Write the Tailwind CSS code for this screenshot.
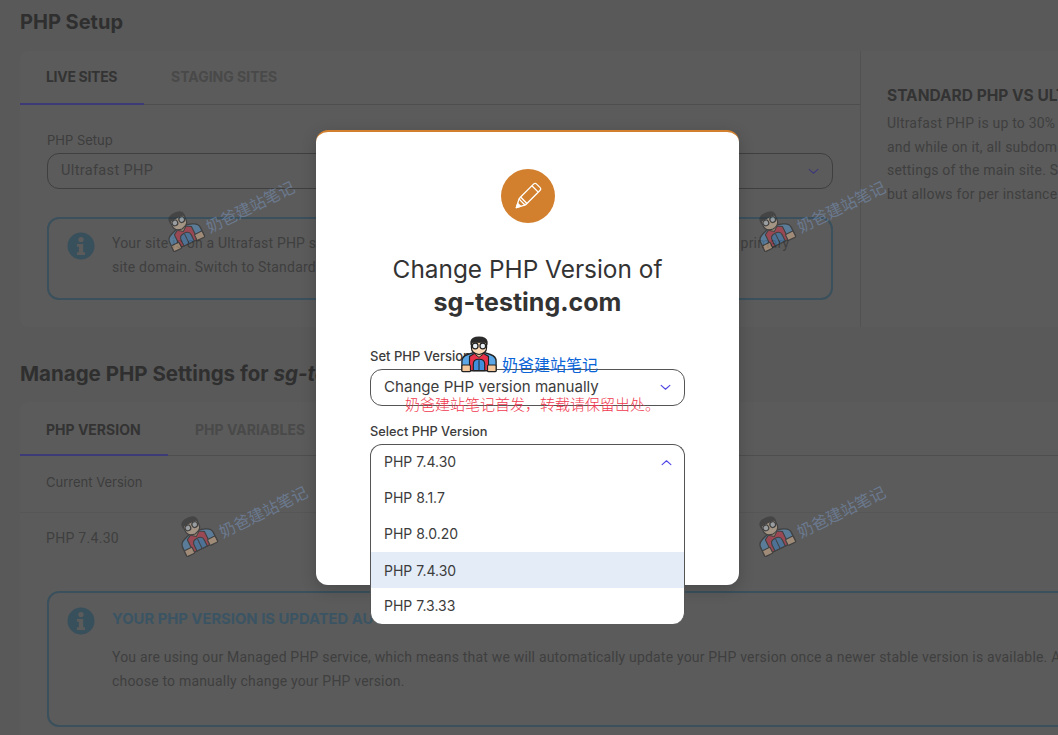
<!DOCTYPE html>
<html lang="en">
<head>
<meta charset="utf-8">
<title>PHP Manager</title>
<script src="https://cdn.jsdelivr.net/npm/@tailwindcss/browser@4"></script>
</head>
<body class="bg-[#595959] font-['Roboto',sans-serif] text-[#3f3f3f] h-[735px] w-[1058px] overflow-hidden relative">

<!-- shared drawings -->
<svg class="hidden">
    <symbol id="mascot" viewBox="0 0 40 40">
        <path d="M2 37V27q0-5 6-7l6-2h12l6 2q6 2 6 7v10z" fill="#5aa6e6" stroke="#222" stroke-width="1.4"/>
        <path d="M10 37V22l5-3h10l5 3v15z" fill="#e8324a" stroke="#222" stroke-width="1.2"/>
        <path d="M14 37V30q0-5 6-5t6 5v7z" fill="#3f8fdc" stroke="#222" stroke-width="1.2"/>
        <path d="M20 26v11" stroke="#222" stroke-width="1"/>
        <rect x="2" y="31" width="9" height="7" rx="1" fill="#f3c79a" stroke="#222" stroke-width="1.2"/>
        <rect x="29" y="31" width="9" height="7" rx="1" fill="#f3c79a" stroke="#222" stroke-width="1.2"/>
        <path d="M16 15h8v5l-4 3-4-3z" fill="#f0bd92" stroke="#222" stroke-width="1"/>
        <path d="M12 7h16v6q0 6-8 7-8-1-8-7z" fill="#fbd9b5" stroke="#222" stroke-width="1.2"/>
        <path d="M11 10V6q1-5 9-5t9 5v4l-3-3H14z" fill="#2b2b2b"/>
        <circle cx="16" cy="11" r="3" fill="#e8f0f6" stroke="#222" stroke-width="1.3"/>
        <circle cx="24" cy="11" r="3" fill="#e8f0f6" stroke="#222" stroke-width="1.3"/>
    </symbol>
    <symbol id="info" viewBox="0 0 28 28">
        <circle cx="14" cy="14" r="13.5" fill="currentColor"/>
        <circle cx="14" cy="7.6" r="2.7" fill="#5b5b5b"/>
        <path d="M10 12h6.2v8.2H18V23h-8v-2.800h1.900v-5.400H10z" fill="#5b5b5b"/>
    </symbol>
    <symbol id="chev" viewBox="0 0 12 8">
        <path d="M1 1.500l5 4.500 5-4.500" fill="none" stroke="currentColor" stroke-width="1.300" stroke-linecap="round" stroke-linejoin="round"/>
    </symbol>
</svg>

<!-- Page behind the dialog -->
<main class="px-5 pt-[8px]">
    <h2 class="font-['Inter',sans-serif] font-bold text-[#2f2f2f] text-[20px] leading-[28px] mb-[15px]">PHP Setup</h2>

    <section class="flex bg-[#5b5b5b] rounded-t-lg rounded-b-lg w-[1100px] h-[276px]">
        <div class="w-[841px] border-r border-[#525252] shrink-0">
            <div class="flex h-[54px] border-b border-[#4e4e4e] font-['Inter',sans-serif] font-bold text-[14px]">
                <span class="w-[124px] h-[54px] border-b-2 border-[#3d3a78] pl-[26px] pt-[15px] text-[#333] tracking-[-0.3px]">LIVE SITES</span>
                <span class="pl-[27px] pt-[15px] text-[#494949]">STAGING SITES</span>
            </div>
            <div class="px-[27px] pt-[26px]">
                <div class="font-['Inter',sans-serif] text-[13px] leading-[18px] mb-[4px] text-[#3d3d3d]">PHP Setup</div>
                <div class="h-[36px] border border-[#3f3f3f] rounded-xl flex items-center justify-between pl-[13px] pr-[13px] text-[#3f3f3f] text-[14.500px] tracking-[0.35px]">
                    <span>Ultrafast PHP</span>
                    <svg class="w-[11px] h-[7px] text-[#3d3a78]"><use href="#chev"/></svg>
                </div>
                <div class="mt-[28px] h-[83px] border-2 border-[#3a505c] rounded-xl flex gap-[17px] pl-[18px] pt-[12px] pr-[30px]">
                    <svg class="w-[28px] h-[28px] text-[#38505c] shrink-0 mt-px"><use href="#info"/></svg>
                    <p class="text-[14px] leading-[24px] tracking-[0.2px] text-[#3f3f3f]">Your site is on a Ultrafast PHP setup, which is applied to the whole site and is set according to the primary site domain. Switch to Standard PHP to change it per instance.</p>
                </div>
            </div>
        </div>
        <div class="pl-[26px] pt-[36px] w-[240px] shrink-0">
            <h3 class="font-['Inter',sans-serif] font-bold text-[15.500px] leading-[18px] text-[#333] whitespace-nowrap">STANDARD PHP VS ULTRAFAST</h3>
            <div class="mt-[7px] text-[14px] leading-[23.700px] tracking-[0.2px] text-[#3f3f3f] whitespace-nowrap">
                <p>Ultrafast PHP is up to 30% faster</p>
                <p>and while on it, all subdomains use</p>
                <p>settings of the main site. Standard</p>
                <p>but allows for per instance setup</p>
            </div>
        </div>
    </section>

    <h2 class="font-['Inter',sans-serif] font-bold text-[#2f2f2f] text-[20.500px] leading-[28px] mt-[33px] mb-[14px]">Manage PHP Settings for <em>sg-testing.com</em></h2>

    <section class="bg-[#5b5b5b] rounded-t-lg w-[1100px] h-[340px]">
        <div class="flex h-[54px] border-b border-[#4e4e4e] font-['Inter',sans-serif] font-bold text-[14px]">
            <span class="w-[148px] h-[54px] border-b-2 border-[#3d3a78] pl-[26px] pt-[17px] text-[#333]">PHP VERSION</span>
            <span class="pl-[27px] pt-[17px] text-[#494949]">PHP VARIABLES</span>
        </div>
        <div class="h-[57px] border-b border-[#565656] pl-[26px] pt-[17px] font-['Inter',sans-serif] text-[13px] leading-[18px] text-[#3d3d3d]">Current Version</div>
        <div class="h-[78px] pl-[26px] pt-[14px] text-[14px] leading-[22px] tracking-[0.3px]">PHP 7.4.30</div>
        <div class="ml-[27px] h-[136px] border-2 border-[#3a505c] rounded-xl flex gap-[17px] pl-[18px] pt-[13px] w-[1060px]">
            <svg class="w-[28px] h-[28px] text-[#38505c] shrink-0 mt-px"><use href="#info"/></svg>
            <div>
                <h3 class="font-['Inter',sans-serif] font-bold text-[14.800px] leading-[26px] text-[#3a5463] whitespace-nowrap">YOUR PHP VERSION IS UPDATED AUTOMATICALLY</h3>
                <p class="mt-[13px] text-[14px] leading-[24px] tracking-[0.19px] text-[#3f3f3f] whitespace-nowrap">You are using our Managed PHP service, which means that we will automatically update your PHP version once a newer stable version is available. A<br>choose to manually change your PHP version.</p>
            </div>
        </div>
    </section>
</main>

<!-- Tilted watermarks on the page -->
<div class="absolute left-[158px] top-[188px] flex items-end gap-[4px] -rotate-[26deg] opacity-45 text-[#7f9fcc] text-[16px] leading-[20px] font-['Noto_Sans_CJK_SC',sans-serif] whitespace-nowrap"><svg class="w-[38px] h-[38px]"><use href="#mascot"/></svg><span>奶爸建站笔记</span></div>
<div class="absolute left-[749px] top-[188px] flex items-end gap-[4px] -rotate-[26deg] opacity-45 text-[#7f9fcc] text-[16px] leading-[20px] font-['Noto_Sans_CJK_SC',sans-serif] whitespace-nowrap"><svg class="w-[38px] h-[38px]"><use href="#mascot"/></svg><span>奶爸建站笔记</span></div>
<div class="absolute left-[171px] top-[493px] flex items-end gap-[4px] -rotate-[26deg] opacity-45 text-[#7f9fcc] text-[16px] leading-[20px] font-['Noto_Sans_CJK_SC',sans-serif] whitespace-nowrap"><svg class="w-[38px] h-[38px]"><use href="#mascot"/></svg><span>奶爸建站笔记</span></div>
<div class="absolute left-[749px] top-[493px] flex items-end gap-[4px] -rotate-[26deg] opacity-45 text-[#7f9fcc] text-[16px] leading-[20px] font-['Noto_Sans_CJK_SC',sans-serif] whitespace-nowrap"><svg class="w-[38px] h-[38px]"><use href="#mascot"/></svg><span>奶爸建站笔记</span></div>

<!-- Dialog -->
<div class="absolute left-[316px] top-[130px] w-[423px] h-[455px] bg-white rounded-xl border-t-2 border-[#d2802e] shadow-[0_4px_16px_rgba(0,0,0,0.2)] font-['Inter',sans-serif] text-[#333] px-[54px] pt-[37px]">
    <div class="w-[54px] h-[54px] rounded-full bg-[#d2802e] mx-auto flex items-center justify-center">
        <svg class="w-[30px] h-[30px]" viewBox="0 0 30 30" fill="none" stroke="#fff" stroke-width="1.300" stroke-linejoin="round">
            <g transform="rotate(45 15 15)">
                <rect x="10.500" y="0.500" width="9" height="23" rx="1.800"/>
                <path d="M10.500 5h9M10.500 21h9"/>
                <path d="M10.500 23l4.500 8.500 4.500-8.500"/>
                <path d="M13 27.500l2 4 2-4z" fill="#fff"/>
            </g>
        </svg>
    </div>
    <h1 class="mt-[30px] text-center text-[24.400px] leading-[33px] font-normal text-[#333] whitespace-nowrap">Change PHP Version of<br><strong class="font-bold text-[25px]">sg-testing.com</strong></h1>
    <div class="mt-[28px] text-[13px] font-medium leading-[18px] text-[#3c3c3c]">Set PHP Version</div>
    <div class="mt-[4px] h-[37px] border border-[#555] rounded-xl flex items-center justify-between pl-[13px] pr-[13px] text-[15.100px] text-[#3c3c3c]">
        <span>Change PHP version manually</span>
        <svg class="w-[11px] h-[7px] text-[#4f46e5]"><use href="#chev"/></svg>
    </div>
    <div class="mt-[17px] text-[12.800px] font-medium leading-[18px] text-[#3c3c3c]">Select PHP Version</div>

    <!-- open select, its list runs past the dialog -->
    <div class="mt-[3px] relative z-10 h-[180px] w-[315px] bg-white border-x border-t border-[#555] rounded-xl text-[14px] text-[#3c3c3c]">
        <div class="h-[35px] flex items-center justify-between pl-[13px] pr-[12px]">
            <span class="-mt-[2px]">PHP 7.4.30</span>
            <svg class="w-[11px] h-[7px] text-[#4f46e5] rotate-180"><use href="#chev"/></svg>
        </div>
        <div class="h-[36px] flex items-center pl-[13px] pb-0.5">PHP 8.1.7</div>
        <div class="h-[36px] flex items-center pl-[13px] pb-0.5">PHP 8.0.20</div>
        <div class="h-[36px] flex items-center pl-[13px] bg-[#e4ecf8]">PHP 7.4.30</div>
        <div class="h-[36px] flex items-center pl-[13px] pb-0.5 rounded-b-xl">PHP 7.3.33</div>
    </div>
</div>

<!-- Watermarks stamped on the dialog -->
<div class="absolute z-20 left-[460px] top-[335px] flex items-end gap-[4px] font-['Noto_Sans_CJK_SC',sans-serif] text-[#0a64d8] text-[16px] leading-[19px] whitespace-nowrap">
    <svg class="w-[38px] h-[39px]"><use href="#mascot"/></svg>
    <span>奶爸建站笔记</span>
</div>
<div class="absolute z-20 left-[405px] top-[395px] font-['Noto_Sans_CJK_SC',sans-serif] font-light text-[#f0384e] text-[15px] leading-[18px] whitespace-nowrap">奶爸建站笔记首发，转载请保留出处。</div>

</body>
</html>
